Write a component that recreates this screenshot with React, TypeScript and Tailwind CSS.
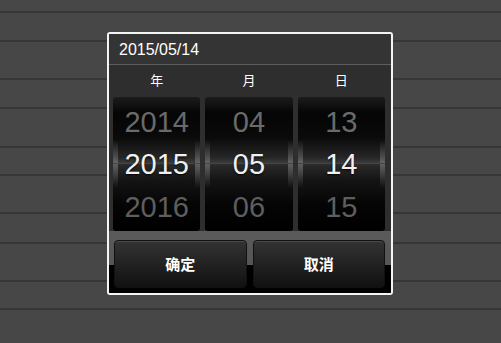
import React from "react";

const rows = [13, 29, 38, 29, 39, 28, 38, 30, 38, 28];

function Wheel({ items }: { items: string[] }) {
  return (
    <div className="relative h-[134px] overflow-hidden rounded-[3px] bg-[linear-gradient(to_bottom,#1c1c1c_0%,#050505_12%,#0a0a0a_30%,#262626_45%,#3d3d3d_49.5%,#2a2a2a_50.5%,#141414_62%,#050505_80%,#000_100%)]">
      <div className="absolute left-0 top-[32%] h-[36%] w-[5px] bg-[linear-gradient(to_bottom,rgba(120,120,120,0),rgba(130,130,130,0.6)_50%,rgba(120,120,120,0))]" />
      <div className="absolute right-0 top-[32%] h-[36%] w-[5px] bg-[linear-gradient(to_bottom,rgba(120,120,120,0),rgba(130,130,130,0.6)_50%,rgba(120,120,120,0))]" />
      <div className="absolute left-0 right-0 top-[66px] h-px bg-[#444]" />
      <div className="relative flex h-full flex-col text-[29px] leading-none">
        <div className="flex h-[46px] items-center justify-center pt-[4px] text-[#6a6a6a]">{items[0]}</div>
        <div className="flex h-[42px] items-center justify-center pt-[1px] text-[#f0f0f0] [text-shadow:0_1px_2px_rgba(0,0,0,0.9)]">{items[1]}</div>
        <div className="flex h-[46px] items-center justify-center pb-[2px] text-[#5e5e5e]">{items[2]}</div>
      </div>
    </div>
  );
}

export default function App() {
  return (
    <div
      className="relative h-[343px] w-[501px] overflow-hidden bg-[#474747]"
      style={{ fontFamily: '"Liberation Sans", Arial, "Noto Sans CJK SC", sans-serif' }}
    >
      <div className="flex flex-col">
        {rows.map((h, i) => (
          <div key={i} className="border-b-2 border-[#363636]" style={{ height: h }} />
        ))}
      </div>

      <div className="absolute left-[107px] top-[32px] flex h-[263px] w-[286px] flex-col overflow-hidden rounded-[3px] border-2 border-[#f4f4f4] bg-[#2e2e2e]">
        <div className="flex h-[31px] items-center border-b border-[#5e5e5e] bg-[#343434] pl-[10px] pt-[1px] text-[16px] text-white">
          2015/05/14
        </div>
        <div className="grid h-[32px] grid-cols-3 gap-[5px] pl-[4px] pr-[6px] text-[13px] text-white" style={{ fontFamily: '"Noto Sans CJK SC", sans-serif' }}>
          <div className="flex items-center justify-center pb-[2px]">年</div>
          <div className="flex items-center justify-center pb-[2px]">月</div>
          <div className="flex items-center justify-center pb-[2px]">日</div>
        </div>
        <div className="grid grid-cols-3 gap-[5px] pl-[4px] pr-[6px]">
          <Wheel items={["2014", "2015", "2016"]} />
          <Wheel items={["04", "05", "06"]} />
          <Wheel items={["13", "14", "15"]} />
        </div>
        <div className="flex flex-1 gap-[6px] bg-[linear-gradient(to_bottom,#5a5a5a_0%,#555_55%,#000_55%,#000_100%)] pb-[5px] pl-[5px] pr-[6px] pt-[9px]">
          {["确定", "取消"].map((t) => (
            <div
              key={t}
              className="flex flex-1 items-center justify-center rounded-[4px] border border-[#111] bg-[linear-gradient(to_bottom,#333_0%,#222_50%,#111_100%)] text-[15px] font-bold text-white shadow-[inset_0_1px_0_rgba(255,255,255,0.12)]"
              style={{ fontFamily: '"Noto Sans CJK SC", sans-serif' }}
            >
              {t}
            </div>
          ))}
        </div>
      </div>
    </div>
  );
}
